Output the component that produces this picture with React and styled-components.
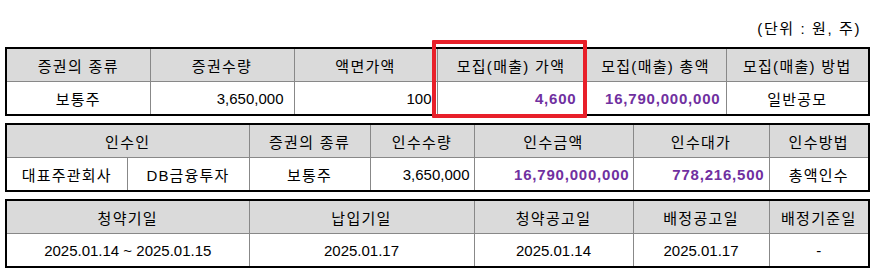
import React from "react";
import styled, { createGlobalStyle } from "styled-components";

const GlobalStyle = createGlobalStyle`
  body {
    margin: 0;
    background: #fff;
    font-family: "Liberation Sans", "Noto Sans CJK KR", sans-serif;
    color: #000;
  }
`;

const offer = {
  head: ["증권의 종류", "증권수량", "액면가액", "모집(매출) 가액", "모집(매출) 총액", "모집(매출) 방법"],
  widths: [144, 144, 143, 148, 141, 143],
};

const underwriter = {
  widths: [121, 122, 121, 104, 159, 136, 100],
};

const schedule = {
  head: ["청약기일", "납입기일", "청약공고일", "배정공고일", "배정기준일"],
  widths: [243, 225, 159, 136, 100],
  row: ["2025.01.14 ~ 2025.01.15", "2025.01.17", "2025.01.14", "2025.01.17", "-"],
};

const App = () => {
  return (
    <Page>
      <GlobalStyle />
      <UnitRow>(단위 : 원, 주)</UnitRow>

      <TableWrap>
        <Table>
          <colgroup>
            {offer.widths.map((w, i) => (
              <col key={i} style={{ width: w }} />
            ))}
          </colgroup>
          <tbody>
            <tr>
              {offer.head.map((h) => (
                <Th key={h}>{h}</Th>
              ))}
            </tr>
            <tr>
              <Td>보통주</Td>
              <Td $align="right" $pr={10}>
                <Num>3,650,000</Num>
              </Td>
              <Td $align="right" $pr={5}>
                <Num>100</Num>
              </Td>
              <Td $align="right" $pr={8}>
                <Amount>4,600</Amount>
              </Td>
              <Td $align="right" $pr={5}>
                <Amount>16,790,000,000</Amount>
              </Td>
              <Td>일반공모</Td>
            </tr>
          </tbody>
        </Table>
        <Highlight />
      </TableWrap>

      <TableWrap>
        <Table>
          <colgroup>
            {underwriter.widths.map((w, i) => (
              <col key={i} style={{ width: w }} />
            ))}
          </colgroup>
          <tbody>
            <tr>
              <Th colSpan={2}>인수인</Th>
              <Th>증권의 종류</Th>
              <Th>인수수량</Th>
              <Th>인수금액</Th>
              <Th>인수대가</Th>
              <Th>인수방법</Th>
            </tr>
            <tr>
              <Td>대표주관회사</Td>
              <Td>DB금융투자</Td>
              <Td>보통주</Td>
              <Td $align="right" $pr={4}>
                <Num>3,650,000</Num>
              </Td>
              <Td $align="right" $pr={3}>
                <Amount>16,790,000,000</Amount>
              </Td>
              <Td $align="right" $pr={4}>
                <Amount>778,216,500</Amount>
              </Td>
              <Td>총액인수</Td>
            </tr>
          </tbody>
        </Table>
      </TableWrap>

      <TableWrap>
        <Table>
          <colgroup>
            {schedule.widths.map((w, i) => (
              <col key={i} style={{ width: w }} />
            ))}
          </colgroup>
          <tbody>
            <tr>
              {schedule.head.map((h) => (
                <Th key={h}>{h}</Th>
              ))}
            </tr>
            <tr>
              {schedule.row.map((v, i) => (
                <Td key={i}>
                  <Num>{v}</Num>
                </Td>
              ))}
            </tr>
          </tbody>
        </Table>
      </TableWrap>
    </Page>
  );
};

const Page = styled.main`
  width: 863px;
  padding-left: 5px;
  display: flex;
  flex-direction: column;
  gap: 7px;
`;

const UnitRow = styled.div`
  height: 40px;
  display: flex;
  align-items: center;
  justify-content: flex-end;
  padding-right: 7px;
  padding-top: 7px;
  font-size: 15px;
  letter-spacing: 1.6px;
  margin-bottom: -7px;
`;

const TableWrap = styled.div`
  position: relative;
`;

const Table = styled.table`
  width: 863px;
  table-layout: fixed;
  border-collapse: collapse;
  border: 2px solid #000;
`;

const Th = styled.td`
  height: 32px;
  padding: 0;
  background: #dadada;
  border: 1px solid #888;
  text-align: center;
  font-size: 15px;
  letter-spacing: 1.3px;
  white-space: nowrap;
`;

const Td = styled.td`
  height: 32px;
  padding: 0 ${(p) => p.$pr || 0}px 0 0;
  border: 1px solid #888;
  text-align: ${(p) => p.$align || "center"};
  font-size: 15px;
  letter-spacing: 1.2px;
  white-space: nowrap;
`;

const Num = styled.span`
  letter-spacing: 0;
`;

const Amount = styled.span`
  color: #7030a0;
  font-weight: 700;
  letter-spacing: 0.8px;
`;

const Highlight = styled.div`
  position: absolute;
  left: 427px;
  top: -7px;
  width: 155px;
  height: 78px;
  box-sizing: border-box;
  border: 4px solid #e8202a;
  border-radius: 1px;
  pointer-events: none;
`;

export default App;
